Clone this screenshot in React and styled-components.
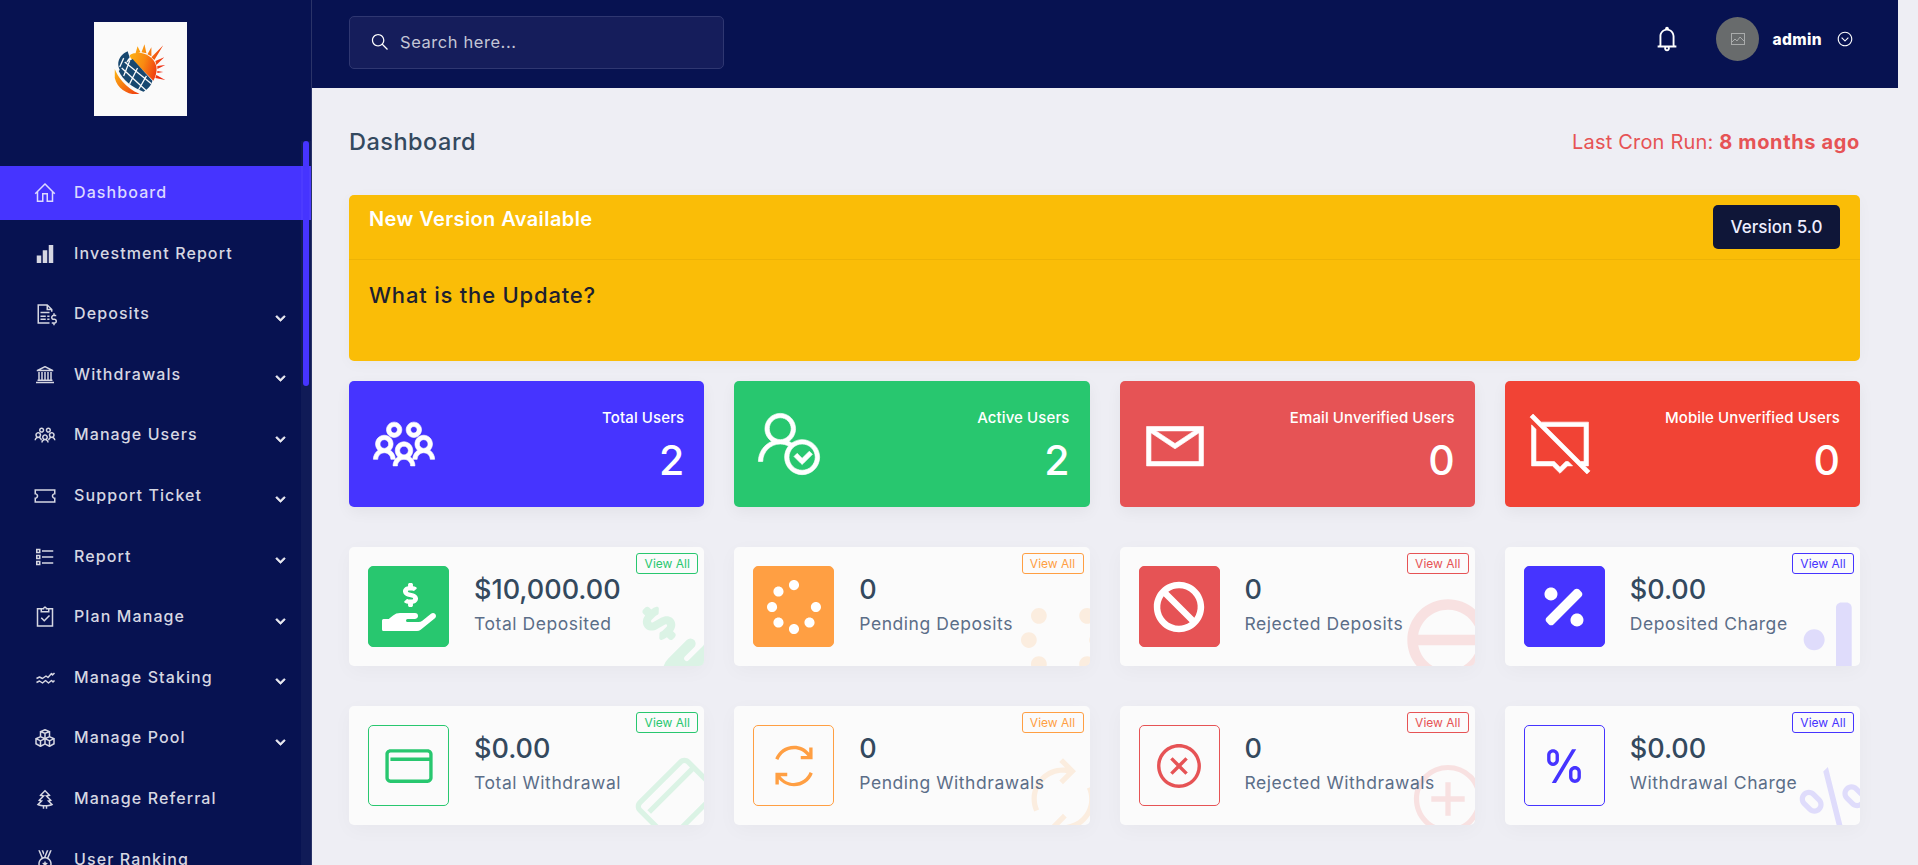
import React from 'react';
import styled, { createGlobalStyle } from 'styled-components';
import { FaHandHoldingUsd, FaSpinner, FaBan, FaPercentage, FaChevronDown } from 'react-icons/fa';
import {
  LiaHomeSolid, LiaSignalSolid, LiaFileInvoiceDollarSolid, LiaUniversitySolid, LiaUsersSolid, LiaTicketAltSolid,
  LiaListSolid, LiaClipboardCheckSolid, LiaCubesSolid, LiaTreeSolid, LiaMedalSolid,
  LiaUserCheckSolid, LiaEnvelope, LiaCommentSlashSolid, LiaCreditCard, LiaSyncSolid, LiaTimesCircle, LiaPercentSolid,
  LiaBell, LiaSearchSolid, LiaChevronCircleDownSolid,
} from 'react-icons/lia';

const FONT = `Inter, "Noto Sans", "Liberation Sans", sans-serif`;
const C = { primary: '#4634ff', green: '#28c76f', red: '#e65355', orange: '#ff9f43', danger: '#f14335' };

const Global = createGlobalStyle`
  html, body { margin: 0; padding: 0; background: #eeeef4; }
  body { font-family: ${FONT}; overflow: hidden; }
  * { box-sizing: border-box; }
`;

const Page = styled.div`display: flex; width: 1918px; height: 865px; overflow: hidden;`;

const Sidebar = styled.aside`
  position: relative; flex: 0 0 312px; height: 865px; background: #071251; overflow: hidden;
  border-right: 1px solid #2a3368;
`;
const LogoWrap = styled.div`height: 166px; padding: 22px 31px 0 0; display: flex; justify-content: center;`;
const LogoBox = styled.div`width: 93px; height: 94px; background: #fafafa;`;
const Nav = styled.nav`display: flex; flex-direction: column; gap: 6.6px;`;
const NavItem = styled.div`
  flex: 0 0 54px; display: flex; align-items: center; padding: 0 25px 0 33px;
  background: ${p => (p.$active ? C.primary : 'transparent')};
  color: ${p => (p.$active ? '#dcd9ff' : '#d6d7e2')};
`;
const NavIcon = styled.span`width: 41px; font-size: 24px; display: flex;`;
const NavLabel = styled.span`flex: 1; font-size: 16px; font-weight: 500; letter-spacing: 1.1px; padding-bottom: 2px;`;
const NavCaret = styled.span`display: flex; font-size: 11px; color: #e8e8f0; margin-top: 8px; svg { stroke: currentColor; stroke-width: 30px; }`;
const Rail = styled.div`position: absolute; top: 141px; right: 0; bottom: 0; width: 10px; background: rgba(255,255,255,.04);`;
const Thumb = styled.div`position: absolute; top: 141px; right: 2px; width: 6px; height: 245px; border-radius: 6px; background: ${C.primary};`;

const Main = styled.main`flex: 0 0 1586px; display: flex; flex-direction: column;`;
const Topbar = styled.header`
  height: 88px; flex: none; background: #071251; display: flex; align-items: center; padding: 0 44px 0 37px;
`;
const Search = styled.div`
  width: 375px; height: 53px; margin-bottom: 3px; padding: 0 20px 2px; display: flex; align-items: center; gap: 10px;
  background: #151d5b; border: 1px solid #2f3771; border-radius: 5px; color: #c4c6d6; font-size: 16.5px; letter-spacing: .57px;
`;
const SearchIcon = styled.span`display: flex; font-size: 20px; color: #fff; transform: scaleX(-1);`;
const TopRight = styled.div`margin-left: auto; margin-bottom: 10px; display: flex; align-items: center; color: #fff;`;
const Bell = styled.span`display: flex; font-size: 30px; margin-right: 34px; margin-top: -1px;`;
const Avatar = styled.div`
  width: 43px; height: 44px; border-radius: 50%; background: #686b6c; display: flex; align-items: center; justify-content: center;
  color: #a9abab; margin-right: 13px;
`;
const AdminName = styled.span`font-size: 15.5px; font-weight: 800; letter-spacing: .4px; margin-right: 14px;`;
const UserChevron = styled.span`display: flex; font-size: 18px;`;

const Content = styled.div`flex: 1; padding: 0 38px 0 37px; display: flex; flex-direction: column;`;
const TitleRow = styled.div`height: 107px; display: flex; align-items: center; justify-content: space-between;`;
const Title = styled.h1`margin: 0; font-size: 23.5px; font-weight: 500; color: #34495e; letter-spacing: .5px;`;
const Cron = styled.div`font-size: 20px; color: ${C.red}; letter-spacing: .18px; b { font-weight: 700; letter-spacing: .65px; }`;

const Banner = styled.section`height: 166px; background: #fabd07; border-radius: 5px; box-shadow: 0 3px 15px rgba(0,0,0,.03);`;
const BannerHead = styled.div`
  height: 65px; padding: 10px 20px 0; display: flex; justify-content: space-between; align-items: flex-start;
  border-bottom: 1px solid rgba(0,0,0,.05);
`;
const BannerTitle = styled.div`font-size: 20px; font-weight: 600; color: #fff; margin-top: 2px; letter-spacing: .4px;`;
const VersionBtn = styled.div`
  width: 127px; height: 44px; background: #0f1638; color: #eef; border-radius: 5px; font-size: 17px; font-weight: 500;
  display: flex; align-items: center; justify-content: center;
`;
const BannerBody = styled.div`padding: 22px 20px; font-size: 22px; font-weight: 500; color: #1c2030; letter-spacing: .8px;`;

const Grid = styled.div`display: grid; grid-template-columns: repeat(4, 1fr); column-gap: 30px; margin-top: ${p => p.$top}px;`;

const Stat = styled.div`
  height: 126px; border-radius: 5px; background: ${p => p.$bg}; color: #fff; padding: 20px; display: flex; justify-content: space-between;
  align-items: center; box-shadow: 0 5px 15px rgba(0,0,0,.05);
`;
const StatIcon = styled.span`display: flex; font-size: 70px; svg { stroke-width: .3px; }`;
const StatBody = styled.div`text-align: right;`;
const StatLabel = styled.div`font-size: 15px; font-weight: 500; letter-spacing: .1px;`;
const StatValue = styled.div`font-size: 41px; font-weight: 500; line-height: 1; margin-top: 13px;`;

const Widget = styled.div`
  position: relative; height: 119px; background: #fbfbfb; border-radius: 5px; overflow: hidden; padding: 19px 19px; display: flex; gap: 25px;
  box-shadow: 0 5px 20px rgba(0,0,0,.03);
`;
const WidgetIcon = styled.div`
  flex: 0 0 81px; height: 81px; border-radius: 5px; display: flex; align-items: center; justify-content: center; position: relative; z-index: 1;
  background: ${p => (p.$solid ? p.$color : 'transparent')}; color: ${p => (p.$solid ? '#fff' : p.$color)};
  border: 1px solid ${p => p.$color}; font-size: ${p => p.$size || 54}px;
`;
const WidgetBody = styled.div`position: relative; z-index: 1; padding-top: 7px;`;
const WidgetValue = styled.div`font-size: 27px; font-weight: 500; color: #34495e; line-height: 34px;`;
const WidgetLabel = styled.div`font-size: 17.5px; letter-spacing: .55px; color: #5b6e88; margin-top: 5px; line-height: 24px; white-space: nowrap;`;
const ViewAll = styled.span`
  position: absolute; top: 6px; right: 6px; width: 62px; height: 21px; border: 1px solid ${p => p.$color}; border-radius: 3px;
  color: ${p => p.$color}; font-size: 12px; display: flex; align-items: center; justify-content: center; z-index: 2;
`;
const Overlay = styled.span`
  position: absolute; right: -15px; bottom: -16px; width: ${p => p.$w || 84}px; height: 84px; display: flex; align-items: center; justify-content: center;
  color: ${p => p.$color}; opacity: .15; font-size: ${p => p.$size || 84}px; transform: rotate(-45deg);
  svg { flex: none; }
`;

const StakingIcon = () => (
  <svg width="1em" height="1em" viewBox="0 0 24 24" fill="none" stroke="currentColor" strokeWidth="1.5" strokeLinejoin="round">
    <path d="M3.5 12.5l3-1.5 3 1.5 3.5-2.5 2 1.5 3.5-4 1 1.5 2-2" />
    <path d="M3.5 16.5l3-1.5 3 2 3-2.5 3 2.5 3-2.5 1.5 1.5 1.5-1.5" />
  </svg>
);

const nav = [
  ['Dashboard', LiaHomeSolid, false, true],
  ['Investment Report', LiaSignalSolid],
  ['Deposits', LiaFileInvoiceDollarSolid, true],
  ['Withdrawals', LiaUniversitySolid, true],
  ['Manage Users', LiaUsersSolid, true],
  ['Support Ticket', LiaTicketAltSolid, true],
  ['Report', LiaListSolid, true],
  ['Plan Manage', LiaClipboardCheckSolid, true],
  ['Manage Staking', StakingIcon, true],
  ['Manage Pool', LiaCubesSolid, true],
  ['Manage Referral', LiaTreeSolid],
  ['User Ranking', LiaMedalSolid],
];

const stats = [
  ['Total Users', '2', C.primary, LiaUsersSolid],
  ['Active Users', '2', C.green, LiaUserCheckSolid],
  ['Email Unverified Users', '0', C.red, LiaEnvelope],
  ['Mobile Unverified Users', '0', C.danger, LiaCommentSlashSolid],
];

const row1 = [
  ['$10,000.00', 'Total Deposited', C.green, FaHandHoldingUsd, 54, 94, 94],
  ['0', 'Pending Deposits', C.orange, FaSpinner, 54],
  ['0', 'Rejected Deposits', C.red, FaBan, 52],
  ['$0.00', 'Deposited Charge', C.primary, FaPercentage, 52, 63],
];
const row2 = [
  ['$0.00', 'Total Withdrawal', C.green, LiaCreditCard, 54],
  ['0', 'Pending Withdrawals', C.orange, LiaSyncSolid, 54],
  ['0', 'Rejected Withdrawals', C.red, LiaTimesCircle, 54],
  ['$0.00', 'Withdrawal Charge', C.primary, LiaPercentSolid, 54],
];

const Logo = () => (
  <svg width="93" height="94" viewBox="0 0 94 94">
    <defs>
      <linearGradient id="sun" x1="0" y1="0" x2="1" y2="0.3">
        <stop offset="0" stopColor="#fdb813" /><stop offset=".5" stopColor="#f98a12" /><stop offset="1" stopColor="#ee2a10" />
      </linearGradient>
      <linearGradient id="low" x1="0" y1="0" x2="1" y2="1">
        <stop offset="0" stopColor="#fdb813" /><stop offset="1" stopColor="#ef3a10" />
      </linearGradient>
    </defs>
    <path fill="url(#sun)" d="M36 33C46 27 60 33 63 44C64 50 62 55 60 59L37 36ZM42 31L44 24L47 30ZM48 30L51 22L53 31ZM54 32L58 25L58 34ZM58 35L70 23L61 38ZM62 39L71 35L63 43ZM64 44L72 43L64 47ZM64 49L70 50L64 51ZM63 53L72 58L62 56Z" />
    <path fill="url(#low)" d="M21 47C23 53 32 67 46 72C36 74 24 68 21 56C21 53 21 50 21 47Z" />
    <path fill="#17476f" d="M34 29L36 35C33 38 32 41 33 43L27 49C23 44 23 34 34 29Z" />
    <path fill="#17476f" d="M34 40L39 37L59 59C58 64 54 68 50 70C39 66 29 58 25 49Z" />
    <path stroke="#fafafa" strokeWidth="1.3" fill="none" d="M30 36L26 45M36 39L30 54M44 46L36 62M53 54L45 68M28 46L54 70M31 40L58 62" />
  </svg>
);

export default function App() {
  return (
    <Page>
      <Global />
      <Sidebar>
        <LogoWrap><LogoBox><Logo /></LogoBox></LogoWrap>
        <Nav>
          {nav.map(([label, Icon, caret, active]) => (
            <NavItem key={label} $active={active}>
              <NavIcon><Icon /></NavIcon>
              <NavLabel>{label}</NavLabel>
              {caret && <NavCaret><FaChevronDown /></NavCaret>}
            </NavItem>
          ))}
        </Nav>
        <Rail />
        <Thumb />
      </Sidebar>
      <Main>
        <Topbar>
          <Search>
            <SearchIcon><LiaSearchSolid /></SearchIcon>
            <span>Search here...</span>
          </Search>
          <TopRight>
            <Bell><LiaBell /></Bell>
            <Avatar>
              <svg width="14" height="12" viewBox="0 0 14 12" fill="none" stroke="currentColor" strokeWidth="1">
                <rect x=".5" y=".5" width="13" height="11" /><path d="M1 9l3-3 2 2 3-4 4 4" />
              </svg>
            </Avatar>
            <AdminName>admin</AdminName>
            <UserChevron><LiaChevronCircleDownSolid /></UserChevron>
          </TopRight>
        </Topbar>
        <Content>
          <TitleRow>
            <Title>Dashboard</Title>
            <Cron>Last Cron Run: <b>8 months ago</b></Cron>
          </TitleRow>
          <Banner>
            <BannerHead>
              <BannerTitle>New Version Available</BannerTitle>
              <VersionBtn>Version 5.0</VersionBtn>
            </BannerHead>
            <BannerBody>What is the Update?</BannerBody>
          </Banner>
          <Grid $top={20}>
            {stats.map(([label, value, bg, Icon]) => (
              <Stat key={label} $bg={bg}>
                <StatIcon><Icon /></StatIcon>
                <StatBody>
                  <StatLabel>{label}</StatLabel>
                  <StatValue>{value}</StatValue>
                </StatBody>
              </Stat>
            ))}
          </Grid>
          {[[row1, 40, true], [row2, 40, false]].map(([row, top, solid], i) => (
            <Grid key={i} $top={top}>
              {row.map(([value, label, color, Icon, size, w, ovSize]) => (
                <Widget key={label}>
                  <WidgetIcon $solid={solid} $color={color} $size={size}><Icon /></WidgetIcon>
                  <WidgetBody>
                    <WidgetValue>{value}</WidgetValue>
                    <WidgetLabel>{label}</WidgetLabel>
                  </WidgetBody>
                  <ViewAll $color={color}>View All</ViewAll>
                  <Overlay $color={color} $w={w} $size={ovSize}><Icon /></Overlay>
                </Widget>
              ))}
            </Grid>
          ))}
        </Content>
      </Main>
    </Page>
  );
}
